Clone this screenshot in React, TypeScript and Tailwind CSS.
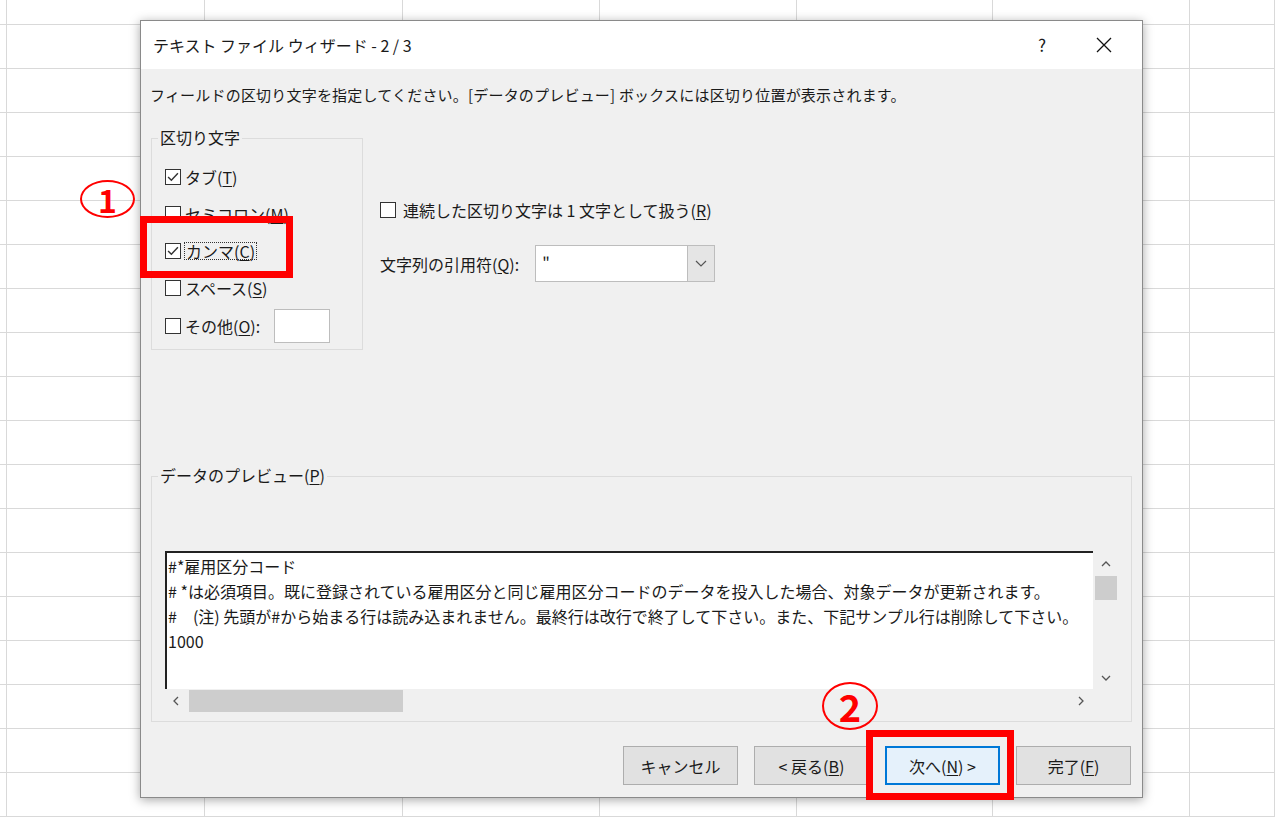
import React from "react";

const cols = [7, 198, 198, 197, 197, 196, 197, 85];
const rows = [25, ...Array(18).fill(44)];

function Check({ checked }: { checked?: boolean }) {
  return (
    <span className="w-[16px] h-[16px] border border-[#333] bg-white flex items-center justify-center shrink-0">
      {checked && (
        <svg width="12" height="10" viewBox="0 0 11 9">
          <path d="M1 4.5 L4 7.5 L10 1" fill="none" stroke="#333" strokeWidth="1.3" />
        </svg>
      )}
    </span>
  );
}

const U = ({ c }: { c: string }) => <span className="underline underline-offset-2">{c}</span>;

export default function App() {
  return (
    <div
      className="relative w-[1275px] h-[818px] overflow-hidden bg-white text-[#1a1a1a]"
      style={{ fontFamily: '"Noto Sans CJK JP", "Noto Sans", sans-serif' }}
    >
      <div className="flex flex-col">
        {rows.map((h, r) => (
          <div key={r} className="flex" style={{ height: h }}>
            {cols.map((w, c) => (
              <div key={c} className="border-r border-b border-[#d9d9d9] shrink-0" style={{ width: w }} />
            ))}
          </div>
        ))}
      </div>

      {/* dialog */}
      <div className="absolute left-[140px] top-[20px] w-[1003px] h-[778px] border border-[#8a8a8a] bg-[#f0f0f0] shadow-[0_2px_10px_rgba(0,0,0,0.35)] flex flex-col">
        <div className="h-[48px] bg-white flex items-center pl-[12px] text-[16px]">
          <span>テキスト ファイル ウィザード - 2 / 3</span>
          <span className="ml-auto mr-[50px] text-[17px]">?</span>
          <svg width="16" height="16" viewBox="0 0 16 16" className="mr-[30px]">
            <path d="M1 1 L15 15 M15 1 L1 15" stroke="#111" strokeWidth="1.3" />
          </svg>
        </div>
        <div className="pl-[9px] pt-[18px] text-[15px] leading-none tracking-[0.2px]">
          フィールドの区切り文字を指定してください。[データのプレビュー] ボックスには区切り位置が表示されます。
        </div>
        <div className="flex pl-[10px] pt-[36px]">
          <div className="relative w-[212px] h-[212px] border border-[#dcdcdc] pl-[13px] pt-[30px] flex flex-col gap-[21px] text-[16px] leading-none">
            <span className="absolute left-[6px] -top-[10px] bg-[#f0f0f0] px-[2px] text-[16px] leading-none">区切り文字</span>
            <div className="flex items-center gap-[4px]"><Check checked /><span>タブ(<U c="T" />)</span></div>
            <div className="flex items-center gap-[4px]"><Check /><span>セミコロン(<U c="M" />)</span></div>
            <div className="flex items-center gap-[4px]"><Check checked /><span className="outline outline-1 outline-dotted outline-[#333] px-[1px]">カンマ(<U c="C" />)</span></div>
            <div className="flex items-center gap-[4px]"><Check /><span>スペース(<U c="S" />)</span></div>
            <div className="flex items-center gap-[4px] -mt-[8px]">
              <Check /><span>その他(<U c="O" />):</span>
              <span className="ml-[10px] w-[56px] h-[34px] bg-white border border-[#bdbdbd]" />
            </div>
          </div>
          <div className="pl-[17px] pt-[64px] flex flex-col text-[16px] leading-none">
            <div className="flex items-center gap-[7px]"><Check /><span>連続した区切り文字は 1 文字として扱う(<U c="R" />)</span></div>
            <div className="flex items-center mt-[27px]">
              <span>文字列の引用符(<U c="Q" />):</span>
              <div className="ml-[16px] w-[180px] h-[37px] bg-white border border-[#bdbdbd] flex">
                <span className="pl-[6px] pt-[8px]">"</span>
                <span className="ml-auto w-[27px] bg-[#e5e5e5] border-l border-[#bdbdbd] flex items-center justify-center">
                  <svg width="12" height="7" viewBox="0 0 12 7"><path d="M1 1 L6 6 L11 1" fill="none" stroke="#555" strokeWidth="1.2" /></svg>
                </span>
              </div>
            </div>
          </div>
        </div>
        {/* preview */}
        <div className="relative ml-[10px] mt-[126px] w-[981px] h-[246px] border border-[#dcdcdc]">
          <span className="absolute left-[6px] -top-[10px] bg-[#f0f0f0] px-[2px] text-[16px] leading-none">データのプレビュー(<U c="P" />)</span>
          <div className="ml-[13px] mt-[74px] w-[953px] h-[162px] flex flex-col">
            <div className="flex h-[138px]">
              <div className="w-[928px] bg-white border-l-2 border-t-2 border-[#222] pl-[1px] pt-[1px] text-[16px] leading-[25px] whitespace-nowrap overflow-hidden">
                <div>#*雇用区分コード</div>
                <div># *は必須項目。既に登録されている雇用区分と同じ雇用区分コードのデータを投入した場合、対象データが更新されます。</div>
                <div>#　(注) 先頭が#から始まる行は読み込まれません。最終行は改行で終了して下さい。また、下記サンプル行は削除して下さい。</div>
                <div>1000</div>
              </div>
              <div className="w-[25px] bg-[#f0f0f0] flex flex-col items-center">
                <svg width="10" height="6" viewBox="0 0 10 6" className="mt-[10px]"><path d="M1 5 L5 1 L9 5" fill="none" stroke="#555" strokeWidth="1.3" /></svg>
                <div className="mt-[9px] w-[22px] h-[24px] bg-[#cdcdcd]" />
                <svg width="10" height="6" viewBox="0 0 10 6" className="mt-auto mb-[8px]"><path d="M1 1 L5 5 L9 1" fill="none" stroke="#555" strokeWidth="1.3" /></svg>
              </div>
            </div>
            <div className="h-[24px] flex items-center">
              <svg width="6" height="10" viewBox="0 0 6 10" className="ml-[8px]"><path d="M5 1 L1 5 L5 9" fill="none" stroke="#555" strokeWidth="1.3" /></svg>
              <div className="ml-[10px] w-[214px] h-[22px] bg-[#cdcdcd]" />
              <svg width="6" height="10" viewBox="0 0 6 10" className="ml-auto mr-[34px]"><path d="M1 1 L5 5 L1 9" fill="none" stroke="#555" strokeWidth="1.3" /></svg>
            </div>
          </div>
        </div>
        <div className="flex justify-end gap-[16px] pr-[11px] mt-[24px] text-[16px]">
          <div className="w-[115px] h-[39px] bg-[#e1e1e1] border border-[#adadad] flex items-center justify-center">キャンセル</div>
          <div className="w-[115px] h-[39px] bg-[#e1e1e1] border border-[#adadad] flex items-center justify-center">&lt; 戻る(<U c="B" />)</div>
          <div className="w-[115px] h-[39px] bg-[#e5f1fb] border-2 border-[#0078d7] flex items-center justify-center">次へ(<U c="N" />) &gt;</div>
          <div className="w-[115px] h-[39px] bg-[#e1e1e1] border border-[#adadad] flex items-center justify-center">完了(<U c="F" />)</div>
        </div>
      </div>

      {/* annotations */}
      <div className="absolute left-[140px] top-[216px] w-[153px] h-[62px] border-[7px] border-[#ff0000]" />
      <div className="absolute left-[866px] top-[730px] w-[148px] h-[70px] border-[7px] border-[#ff0000]" />
      <div className="absolute left-[80px] top-[180px] w-[55px] h-[38px] rounded-[50%] border-2 border-[#ff0000] flex items-center justify-center text-[#ff0000] text-[32px] font-bold leading-none">1</div>
      <div className="absolute left-[822px] top-[682px] w-[56px] h-[48px] rounded-[50%] border-2 border-[#ff0000] flex items-center justify-center text-[#ff0000] text-[38px] font-bold leading-none">2</div>
    </div>
  );
}
